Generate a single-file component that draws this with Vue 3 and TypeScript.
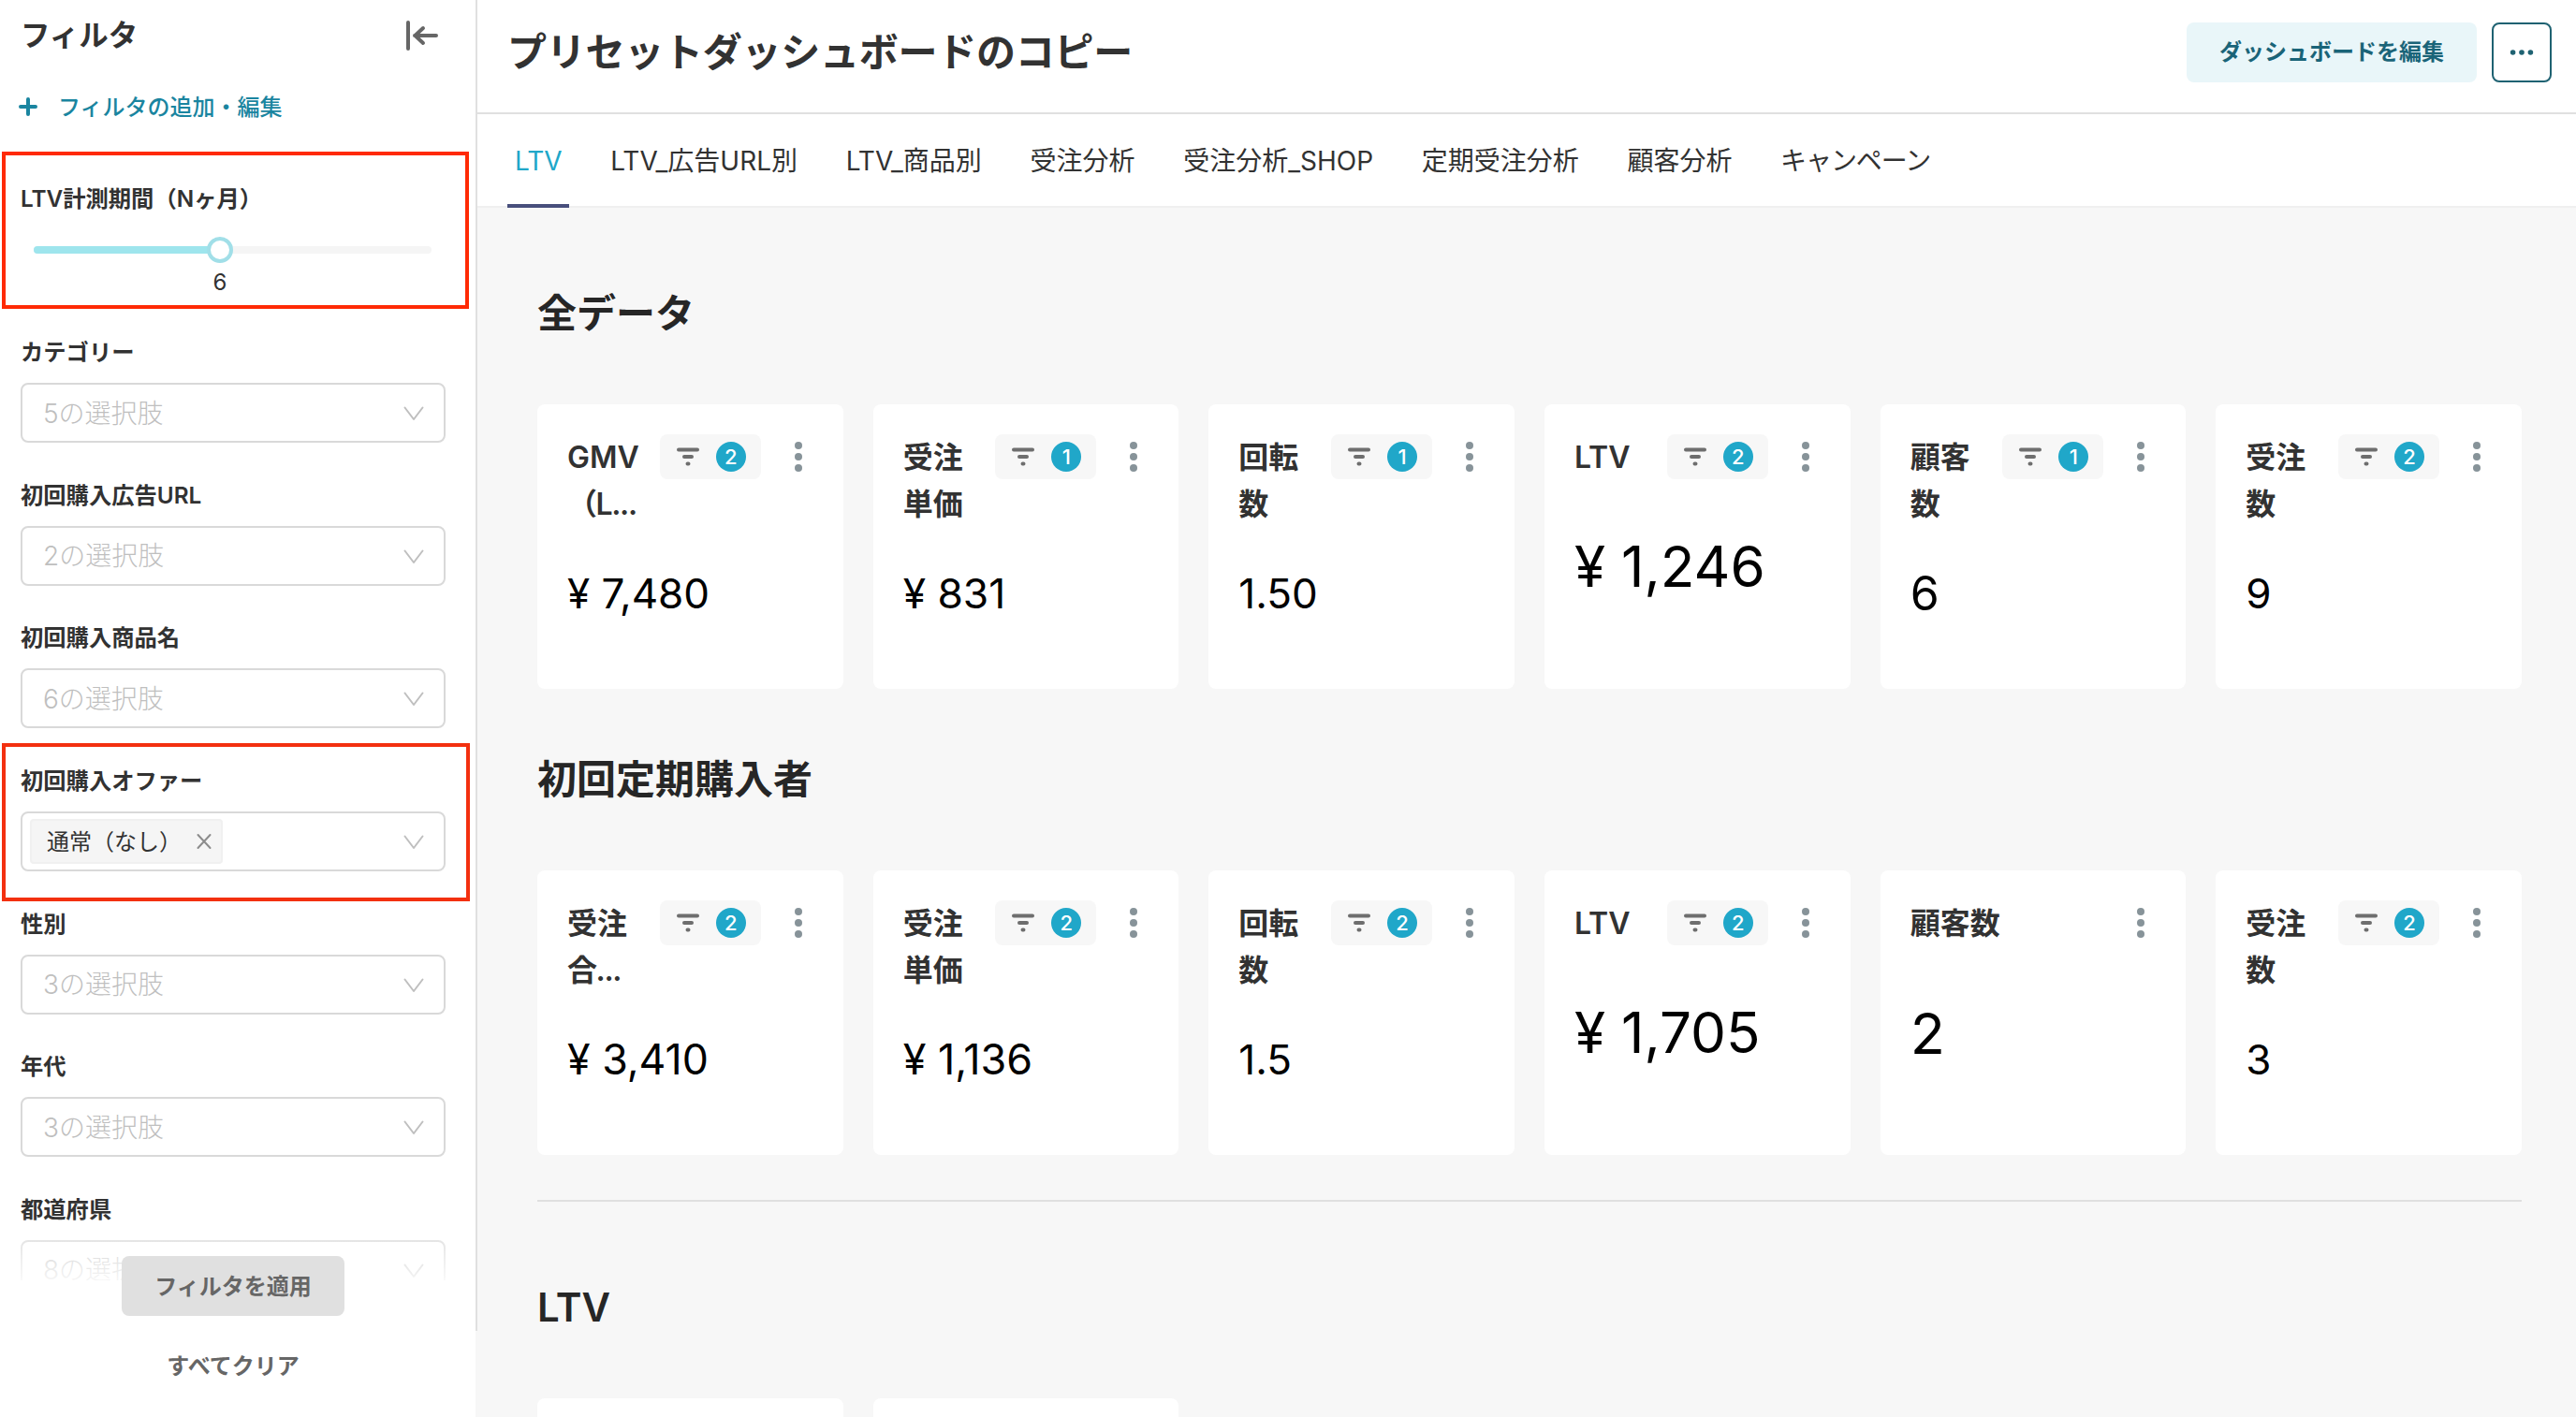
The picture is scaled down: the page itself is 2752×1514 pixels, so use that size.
<script setup lang="ts">
interface Filter {
  label: string
  placeholder?: string
  tag?: string
  highlighted?: boolean
}

interface Metric {
  title: string[]
  badge?: number
  value: string
  size: number
}

const filters: Filter[] = [
  { label: 'カテゴリー', placeholder: '5の選択肢' },
  { label: '初回購入広告URL', placeholder: '2の選択肢' },
  { label: '初回購入商品名', placeholder: '6の選択肢' },
  { label: '初回購入オファー', tag: '通常（なし）', highlighted: true },
  { label: '性別', placeholder: '3の選択肢' },
  { label: '年代', placeholder: '3の選択肢' },
  { label: '都道府県', placeholder: '8の選択肢' },
]

const tabs: string[] = [
  'LTV',
  'LTV_広告URL別',
  'LTV_商品別',
  '受注分析',
  '受注分析_SHOP',
  '定期受注分析',
  '顧客分析',
  'キャンペーン',
]

const sections: { title: string; metrics: Metric[] }[] = [
  {
    title: '全データ',
    metrics: [
      { title: ['GMV', '（L...'], badge: 2, value: '¥ 7,480', size: 44 },
      { title: ['受注', '単価'], badge: 1, value: '¥ 831', size: 44.3 },
      { title: ['回転', '数'], badge: 1, value: '1.50', size: 44 },
      { title: ['LTV'], badge: 2, value: '¥ 1,246', size: 60.2 },
      { title: ['顧客', '数'], badge: 1, value: '6', size: 50 },
      { title: ['受注', '数'], badge: 2, value: '9', size: 44 },
    ],
  },
  {
    title: '初回定期購入者',
    metrics: [
      { title: ['受注', '合...'], badge: 2, value: '¥ 3,410', size: 44.7 },
      { title: ['受注', '単価'], badge: 2, value: '¥ 1,136', size: 44.9 },
      { title: ['回転', '数'], badge: 2, value: '1.5', size: 44 },
      { title: ['LTV'], badge: 2, value: '¥ 1,705', size: 60.2 },
      { title: ['顧客数'], value: '2', size: 61 },
      { title: ['受注', '数'], badge: 2, value: '3', size: 44 },
    ],
  },
]
</script>

<template>
  <div class="app">
    <aside class="sidebar">
      <div class="sidebar-head">
        <h2>フィルタ</h2>
        <svg class="collapse" width="40" height="40" viewBox="0 0 40 40">
          <path d="M6 6V34M36 20H13M22 12L13.500 20L22 28" />
        </svg>
      </div>
      <button class="add-filter">
        <svg width="20" height="20" viewBox="0 0 20 20"><path d="M10 2V18M2 10H18" /></svg>
        <span>フィルタの追加・編集</span>
      </button>

      <div class="filter range">
        <div class="highlight"></div>
        <div class="label">LTV計測期間（Nヶ月）</div>
        <div class="slider">
          <div class="track"></div>
          <div class="handle"></div>
          <div class="mark">6</div>
        </div>
      </div>

      <div v-for="f in filters" :key="f.label" class="filter">
        <div v-if="f.highlighted" class="highlight second"></div>
        <div class="label">{{ f.label }}</div>
        <div class="select">
          <span v-if="f.tag" class="tag">
            <span class="tag-text">{{ f.tag }}</span>
            <svg width="18" height="18" viewBox="0 0 18 18"><path d="M2.500 2L15.500 16M15.500 2L2.500 16" /></svg>
          </span>
          <span v-else class="placeholder">{{ f.placeholder }}</span>
          <svg class="chevron" width="24" height="24" viewBox="0 0 24 24"><path d="M2.500 5.500L12 18L21.500 5.500" /></svg>
        </div>
      </div>

      <div class="actions">
        <div class="fade"></div>
        <div class="actions-body">
          <button class="apply">フィルタを適用</button>
          <button class="clear">すべてクリア</button>
        </div>
      </div>
    </aside>

    <main class="main">
      <header class="header">
        <h1>プリセットダッシュボードのコピー</h1>
        <div class="header-actions">
          <button class="edit">ダッシュボードを編集</button>
          <button class="more">
            <svg width="28" height="8" viewBox="0 0 28 8">
              <circle cx="4.600" cy="4" r="2.800" /><circle cx="14" cy="4" r="2.800" /><circle cx="23.400" cy="4" r="2.800" />
            </svg>
          </button>
        </div>
      </header>

      <nav class="tabs">
        <div v-for="(t, i) in tabs" :key="t" class="tab" :class="{ active: i === 0 }">{{ t }}</div>
      </nav>

      <div class="content">
        <section v-for="s in sections" :key="s.title" class="section">
          <h3>{{ s.title }}</h3>
          <div class="grid">
            <article v-for="(m, i) in s.metrics" :key="i" class="card">
              <div class="card-head">
                <div class="card-title">
                  <div v-for="line in m.title" :key="line" :class="{ clipped: line.endsWith('...') }">{{ line }}</div>
                </div>
                <div v-if="m.badge" class="pill">
                  <svg width="24" height="24" viewBox="0 0 24 24">
                    <path d="M2 4.500H22M8 12H16M11.500 19.500H12.500" />
                  </svg>
                  <span class="badge">{{ m.badge }}</span>
                </div>
                <svg class="kebab" width="8" height="32" viewBox="0 0 8 32">
                  <circle cx="4" cy="4" r="4" /><circle cx="4" cy="16" r="4" /><circle cx="4" cy="28" r="4" />
                </svg>
              </div>
              <div class="card-value" :class="{ compact: m.title.length > 1 }">
                <span :style="{ fontSize: m.size + 'px' }">{{ m.value }}</span>
              </div>
            </article>
          </div>
        </section>
        <div class="divider"></div>
        <section class="section">
          <h3>LTV</h3>
          <div class="grid">
            <article class="card"></article>
            <article class="card"></article>
          </div>
        </section>
      </div>
    </main>
  </div>
</template>

<style>
body {
  margin: 0;
  background: #f7f7f7;
}
</style>

<style scoped>
.app {
  display: flex;
  width: 2752px;
  height: 1514px;
  overflow: hidden;
  background: #f7f7f7;
  color: #323232;
  font-family: Inter, "Noto Sans CJK JP", sans-serif;
}
.app * {
  box-sizing: border-box;
}
h1,
h2,
h3 {
  margin: 0;
}
button {
  border: 0;
  padding: 0;
  background: none;
  font-family: inherit;
}
svg {
  display: block;
  flex: none;
  fill: none;
  stroke-linecap: round;
  stroke-linejoin: round;
}

/* sidebar */
.sidebar {
  position: relative;
  width: 508px;
  height: 1514px;
  flex: none;
  overflow: hidden;
  background: #fff;
}
.sidebar-head {
  display: flex;
  align-items: center;
  justify-content: space-between;
  height: 76px;
  padding: 0 38px 0 22px;
}
.sidebar-head h2 {
  font-size: 31.500px;
  font-weight: 600;
  line-height: 40px;
}
.collapse {
  stroke: #666;
  stroke-width: 4;
}
.add-filter {
  display: flex;
  align-items: center;
  gap: 22px;
  height: 76px;
  padding-left: 20px;
  color: #1a85a0;
  font-size: 24px;
  font-weight: 500;
}
.add-filter span {
  padding-bottom: 4px;
}
.add-filter svg {
  stroke: currentColor;
  stroke-width: 4;
}
.filter {
  position: relative;
  height: 152.670px;
  padding: 0 32px 0 22px;
}
.label {
  height: 49px;
  line-height: 30px;
  padding-top: 1px;
  font-size: 24.300px;
  font-weight: 600;
}
.range {
  height: 164px;
  margin-top: 44px;
}
.highlight {
  position: absolute;
  left: 2px;
  top: -34px;
  width: 499px;
  height: 168px;
  border: 4px solid #ff2a05;
}
.highlight.second {
  top: -24px;
  width: 500px;
  height: 169px;
  border-color: #f3300f;
}
.slider {
  position: relative;
  width: 425px;
  height: 8px;
  margin: 18px 0 0 14px;
  border-radius: 4px;
  background: #f5f5f5;
}
.track {
  width: 199px;
  height: 8px;
  border-radius: 4px;
  background: #9ee5ed;
}
.handle {
  position: absolute;
  left: 185px;
  top: -10px;
  width: 28px;
  height: 28px;
  border: 4px solid #a1dfe8;
  border-radius: 50%;
  background: #fff;
}
.mark {
  position: absolute;
  left: 179px;
  top: 24px;
  width: 40px;
  line-height: 30px;
  text-align: center;
  font-size: 24px;
}
.select {
  display: flex;
  align-items: center;
  justify-content: space-between;
  width: 454px;
  height: 64px;
  padding: 0 20px 0 22px;
  border: 2px solid #d9d9d9;
  border-radius: 8px;
  background: #fff;
}
.placeholder {
  padding-bottom: 3px;
  color: #bfbfbf;
  font-size: 28px;
  font-weight: 300;
}
.chevron {
  margin-top: 2px;
  stroke: #bfbfbf;
  stroke-width: 2;
}
.tag {
  display: flex;
  align-items: center;
  gap: 15px;
  height: 48px;
  margin-left: -14px;
  padding: 0 9px 0 16px;
  border: 2px solid #f0f0f0;
  border-radius: 4px;
  background: #f5f5f5;
  font-size: 24px;
}
.tag-text {
  padding-bottom: 3px;
}
.tag svg {
  stroke: #8c8c8c;
  stroke-width: 2;
}
.actions {
  position: absolute;
  left: 0;
  right: 0;
  bottom: 0;
  height: 214px;
}
.fade {
  height: 68px;
  background: linear-gradient(rgba(255, 255, 255, 0), rgba(255, 255, 255, 0.850));
}
.actions-body {
  display: flex;
  flex-direction: column;
  align-items: center;
  height: 146px;
  padding-right: 10px;
  background: #fff;
}
.apply {
  width: 238px;
  height: 64px;
  margin-top: -26px;
  padding-bottom: 4px;
  border-radius: 8px;
  background: #e0e0e0;
  color: #666;
  font-size: 24px;
  font-weight: 600;
}
.clear {
  height: 64px;
  margin-top: 22px;
  padding-bottom: 5px;
  color: #666;
  font-size: 24px;
  font-weight: 600;
}

/* main */
.main {
  flex: 1;
  min-width: 0;
}
.main::before {
  content: "";
  position: absolute;
  left: 508px;
  top: 0;
  width: 2px;
  height: 1422px;
  background: #e0e0e0;
}
.header {
  display: flex;
  align-items: center;
  justify-content: space-between;
  height: 122px;
  padding: 0 26px 8px 34px;
  border-bottom: 2px solid #e0e0e0;
  background: #fff;
}
.header h1 {
  font-size: 42px;
  font-weight: 600;
  letter-spacing: -0.250px;
  line-height: 60px;
}
.header-actions {
  display: flex;
  gap: 16px;
}
.edit {
  width: 310px;
  height: 64px;
  padding-bottom: 5px;
  border-radius: 8px;
  background: #e9f6f9;
  color: #1a6478;
  font-size: 24px;
  font-weight: 600;
}
.more {
  display: grid;
  place-items: center;
  width: 64px;
  height: 64px;
  border: 2px solid #1f6272;
  border-radius: 8px;
}
.more svg {
  fill: #1f6272;
}
.tabs {
  display: flex;
  gap: 51.700px;
  height: 100px;
  padding-left: 42px;
  border-bottom: 2px solid #f0f0f0;
  background: #fff;
}
.tab {
  position: relative;
  padding-top: 1px;
  line-height: 98px;
  font-size: 28px;
}
.tab:last-child {
  letter-spacing: -1.100px;
}
.tab.active {
  color: #20a7c9;
}
.tab.active::after {
  content: "";
  position: absolute;
  left: -8px;
  right: -7px;
  bottom: -2px;
  height: 4px;
  background: #484f7c;
}
.content {
  padding: 0 58px 0 66px;
}
.section h3 {
  height: 210px;
  padding-top: 83px;
  color: #262626;
  font-size: 42px;
  font-weight: 600;
  line-height: 60px;
}
.section + .section h3 {
  height: 194px;
  padding-top: 67px;
}
.grid {
  display: grid;
  grid-template-columns: repeat(6, 1fr);
  gap: 32px;
}
.card {
  height: 304px;
  padding: 32px;
  border-radius: 8px;
  background: #fff;
}
.card-head {
  display: flex;
  align-items: flex-start;
}
.card-title {
  flex: 1;
  height: 100px;
  white-space: nowrap;
  font-size: 32px;
  font-weight: 600;
  line-height: 50px;
}
.clipped {
  letter-spacing: -1.400px;
}
.pill {
  display: flex;
  align-items: center;
  gap: 18px;
  width: 108px;
  height: 48px;
  padding-left: 18px;
  margin-right: 36px;
  border-radius: 8px;
  background: #f7f7f7;
}
.pill svg {
  stroke: #6e6e6e;
  stroke-width: 4;
}
.badge {
  width: 32px;
  height: 32px;
  border-radius: 50%;
  background: #20a7c9;
  color: #fff;
  text-align: center;
  font-size: 22px;
  font-weight: 500;
  line-height: 32px;
}
.kebab {
  margin: 8px 12px 0 0;
  fill: #879399;
}
.card-value {
  display: flex;
  align-items: center;
  height: 72px;
  margin-top: 6px;
  color: #000;
}
.card-value.compact {
  margin-top: 34px;
}
.card-value span {
  line-height: 1;
}
.divider {
  height: 2px;
  margin-top: 48px;
  background: #e0e0e0;
}
</style>
